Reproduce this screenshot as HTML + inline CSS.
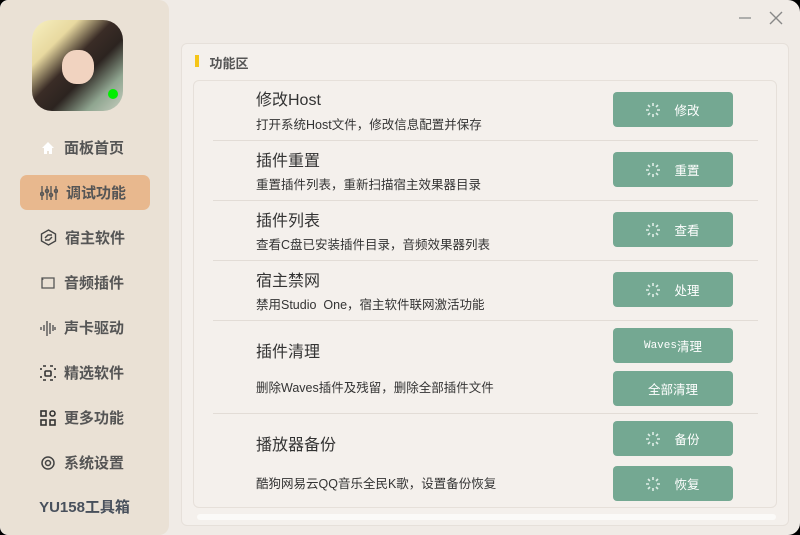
<!DOCTYPE html><html><head><meta charset="utf-8"><style>
*{margin:0;padding:0;box-sizing:border-box}
body{width:800px;height:535px;background:#000;font-family:"Liberation Sans","Noto Sans CJK SC",sans-serif;overflow:hidden;position:relative}
.win{position:absolute;left:0;top:0;width:800px;height:535px;background:#f0ebe6;border-radius:8px 12px 12px 8px}
.side{position:absolute;left:0;top:0;width:169px;height:535px;background:#eae1d5;border-radius:10px}
.av{position:absolute;left:32px;top:20px;width:91px;height:91px;border-radius:20px;overflow:hidden;background:linear-gradient(135deg,#f7f0c0 0%,#e8d9a0 25%,#3a2c26 45%,#2c2420 60%,#8fa590 80%,#c8cfc0 100%)}
.av .face{position:absolute;left:30px;top:30px;width:32px;height:34px;border-radius:45%;background:#f1d3c0}
.av .dot{position:absolute;left:76px;top:69px;width:10px;height:10px;border-radius:50%;background:#00ee00}
.nav{position:absolute;left:20px;width:130px;height:35px;display:flex;align-items:center;font-size:15px;font-weight:bold;color:#555;padding-left:20px}
.nav svg{margin-right:8px}
.nav.act{background:#e8b88e;border-radius:7px}
.brand{position:absolute;left:0;width:169px;top:496px;text-align:center;font-size:15px;font-weight:bold;color:#48505c}
.ctl{position:absolute;top:10px;color:#888}
.panel{position:absolute;left:181px;top:43px;width:608px;height:483px;background:#f4f0ec;border:1px solid #e6e0da;border-radius:6px}
.title{position:absolute;left:195px;top:53px;font-size:13px;font-weight:bold;color:#555}
.bar{position:absolute;left:195px;top:55px;width:4px;height:12px;background:#f5c518}
.card{position:absolute;left:193px;top:80px;width:584px;height:428px;border:1px solid #e6e0da;border-radius:6px;background:#f4f0ec}
.sep{position:absolute;left:213px;width:545px;height:1px;background:#e2dcd6}
.h{position:absolute;left:256px;font-size:16px;color:#333}
.d{position:absolute;left:256px;font-size:12.5px;color:#333}
.btn{position:absolute;left:613px;width:120px;height:35px;background:#74a892;border-radius:4px;color:#fff;font-size:12.5px;display:flex;align-items:center;justify-content:center}
.btn svg{margin-right:14px}
.scroll{position:absolute;left:197px;top:514px;width:579px;height:6px;background:#fbfaf8;border-radius:3px}
</style></head><body><div class="win">
<div class="side">
<div class="av"><div class="face"></div><div class="dot"></div></div>
<div class="nav" style="top:130px"><svg width="16" height="16" viewBox="0 0 16 16"><path d="M8 2L2 8h2v6h3v-3h2v3h3V8h2z" fill="#fff"/></svg>面板首页</div>
<div class="nav act" style="top:175px"><svg width="18" height="16" viewBox="0 0 18 16" stroke="#555" stroke-width="1.3" fill="none"><path d="M2 1v14M7 1v14M11 1v14M16 1v14"/><circle cx="2" cy="9" r="1.6"/><circle cx="7" cy="6" r="1.6"/><circle cx="11" cy="10" r="1.6"/><circle cx="16" cy="6" r="1.6"/></svg>调试功能</div>
<div class="nav" style="top:220px"><svg width="17" height="17" viewBox="0 0 17 17" stroke="#444" stroke-width="1.4" fill="none"><path d="M8.5 1l7 4v7l-7 4-7-4V5z"/><path d="M5 9l3-3h4M12 8l-3 3H5"/></svg>宿主软件</div>
<div class="nav" style="top:265px"><svg width="16" height="14" viewBox="0 0 16 14" stroke="#555" stroke-width="1.3" fill="none"><path d="M2 2h12v10H2zM2 2l1 2"/></svg>音频插件</div>
<div class="nav" style="top:310px"><svg width="16" height="16" viewBox="0 0 16 16" stroke="#555" stroke-width="1.4"><path d="M1 7v3M4 5v6M7 1v15M10 3v11M13 5v6M15 7v3"/></svg>声卡驱动</div>
<div class="nav" style="top:355px"><svg width="16" height="16" viewBox="0 0 16 16" stroke="#333" stroke-width="1.6" fill="none"><path d="M1 3v2M1 11v2M3 1h3M10 1h3M15 3v2M3 15h3M15 11v2M10 15h3"/><rect x="5" y="6" width="6" height="5" rx="1"/></svg>精选软件</div>
<div class="nav" style="top:400px"><svg width="16" height="16" viewBox="0 0 16 16" stroke="#333" stroke-width="1.6" fill="none"><rect x="1" y="1" width="5" height="5"/><rect x="1" y="10" width="5" height="5"/><rect x="10" y="10" width="5" height="5"/><circle cx="12.5" cy="3.5" r="2.5"/></svg>更多功能</div>
<div class="nav" style="top:445px"><svg width="16" height="16" viewBox="0 0 16 16" stroke="#444" stroke-width="1.5" fill="none"><circle cx="8" cy="8" r="6"/><circle cx="8" cy="8" r="2.5"/></svg>系统设置</div>
<div class="brand">YU158工具箱</div>
</div>
<svg class="ctl" style="left:738px" width="14" height="16"><path d="M1 8h12" stroke="#999" stroke-width="1.5"/></svg>
<svg class="ctl" style="left:769px" width="14" height="16"><path d="M1 2l12 12M13 2L1 14" stroke="#888" stroke-width="1.4"/></svg>
<div class="panel"></div>
<div class="bar"></div><div class="title">&nbsp;&nbsp;&nbsp;&nbsp;功能区</div>
<div class="card"></div>
<div class="sep" style="top:140px"></div><div class="sep" style="top:200px"></div><div class="sep" style="top:260px"></div><div class="sep" style="top:320px"></div><div class="sep" style="top:413px"></div>
<div class="h" style="top:86px">修改Host</div><div class="d" style="top:114px">打开系统Host文件，修改信息配置并保存</div>
<div class="h" style="top:147px">插件重置</div><div class="d" style="top:174px">重置插件列表，重新扫描宿主效果器目录</div>
<div class="h" style="top:207px">插件列表</div><div class="d" style="top:234px">查看C盘已安装插件目录，音频效果器列表</div>
<div class="h" style="top:267px">宿主禁网</div><div class="d" style="top:294px">禁用Studio&nbsp;&nbsp;One，宿主软件联网激活功能</div>
<div class="h" style="top:338px">插件清理</div><div class="d" style="top:377px">删除Waves插件及残留，删除全部插件文件</div>
<div class="h" style="top:431px">播放器备份</div><div class="d" style="top:473px">酷狗网易云QQ音乐全民K歌，设置备份恢复</div>
<div class="btn" style="top:92px"><svg width="14" height="14" viewBox="0 0 14 14" stroke="#dfeee7" stroke-width="1.6"><path d="M7 0v3M7 11v3M0 7h3M11 7h3M2 2l2 2M10 10l2 2M12 2l-2 2M2 12l2-2"/></svg>修改</div>
<div class="btn" style="top:152px"><svg width="14" height="14" viewBox="0 0 14 14" stroke="#dfeee7" stroke-width="1.6"><path d="M7 0v3M7 11v3M0 7h3M11 7h3M2 2l2 2M10 10l2 2M12 2l-2 2M2 12l2-2"/></svg>重置</div>
<div class="btn" style="top:212px"><svg width="14" height="14" viewBox="0 0 14 14" stroke="#dfeee7" stroke-width="1.6"><path d="M7 0v3M7 11v3M0 7h3M11 7h3M2 2l2 2M10 10l2 2M12 2l-2 2M2 12l2-2"/></svg>查看</div>
<div class="btn" style="top:272px"><svg width="14" height="14" viewBox="0 0 14 14" stroke="#dfeee7" stroke-width="1.6"><path d="M7 0v3M7 11v3M0 7h3M11 7h3M2 2l2 2M10 10l2 2M12 2l-2 2M2 12l2-2"/></svg>处理</div>
<div class="btn" style="top:328px"><span style="font-family:'Liberation Mono',monospace;font-size:11px">Waves</span>清理</div>
<div class="btn" style="top:371px">全部清理</div>
<div class="btn" style="top:421px"><svg width="14" height="14" viewBox="0 0 14 14" stroke="#dfeee7" stroke-width="1.6"><path d="M7 0v3M7 11v3M0 7h3M11 7h3M2 2l2 2M10 10l2 2M12 2l-2 2M2 12l2-2"/></svg>备份</div>
<div class="btn" style="top:466px"><svg width="14" height="14" viewBox="0 0 14 14" stroke="#dfeee7" stroke-width="1.6"><path d="M7 0v3M7 11v3M0 7h3M11 7h3M2 2l2 2M10 10l2 2M12 2l-2 2M2 12l2-2"/></svg>恢复</div>
<div class="scroll"></div>
</div></body></html>
